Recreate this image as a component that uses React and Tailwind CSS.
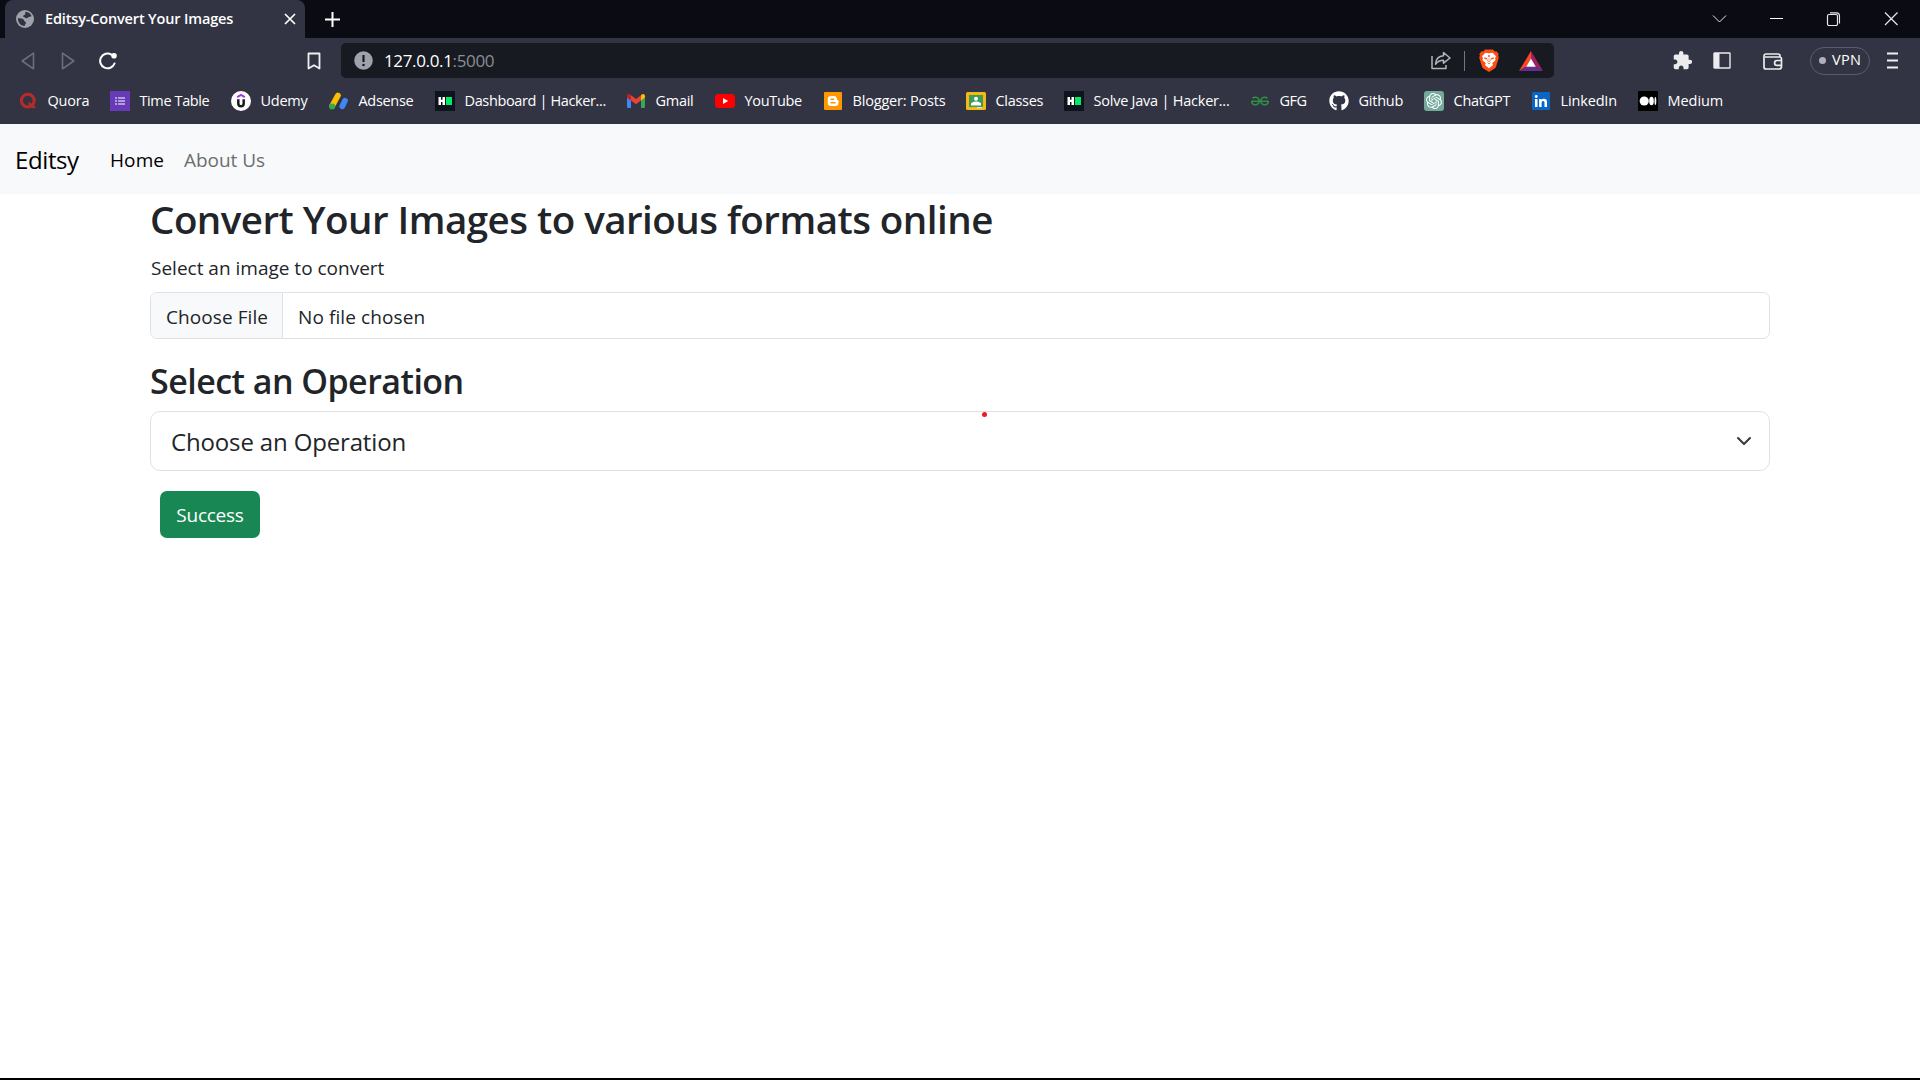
import React from "react";
import { FaGithub } from "react-icons/fa";
import { SiOpenai, SiGeeksforgeeks } from "react-icons/si";
import { MdExtension } from "react-icons/md";

const QuoraIcon = () => (
  <svg width="20" height="20" viewBox="0 0 20 20" fill="none" stroke="#b92b27">
    <circle cx="9.8" cy="9.6" r="6.4" strokeWidth="3" />
    <path d="M10.500 12.200c2.200.2 3 3.500 4.600 3.800.8.1 1.500-.1 1.900-.5" strokeWidth="2.400" />
  </svg>
);

const FormsIcon = () => (
  <svg width="20" height="20" viewBox="0 0 20 20">
    <rect width="20" height="20" fill="#673ab7" />
    <g fill="#b39ddb">
      <rect x="5" y="6" width="2" height="2" />
      <rect x="5" y="9" width="2" height="2" />
      <rect x="5" y="12" width="2" height="2" />
      <rect x="8" y="6" width="7" height="2" />
      <rect x="8" y="9" width="7" height="2" />
      <rect x="8" y="12" width="7" height="2" />
    </g>
  </svg>
);

const UdemyIcon = () => (
  <svg width="20" height="20" viewBox="0 0 20 20" fill="none">
    <circle cx="10" cy="10" r="10" fill="#fff" />
    <path d="M6.200 6.200 10 4l3.800 2.200" stroke="#a435f0" strokeWidth="2" />
    <path d="M7.300 8.200v4.200c0 1.700 1 2.800 2.700 2.800s2.700-1.100 2.700-2.800V8.200" stroke="#1c1d1f" strokeWidth="2.500" />
  </svg>
);

const AdsenseIcon = () => (
  <svg width="21" height="20" viewBox="0 0 21 20" strokeLinecap="round">
    <path d="M3.400 15.200 9.400 4.200" stroke="#fbbc04" strokeWidth="6" />
    <circle cx="3.300" cy="15.700" r="3.200" fill="#34a853" />
    <path d="M14 15.600 16.800 9.800" stroke="#4285f4" strokeWidth="6" />
  </svg>
);

const HackerRankIcon = () => (
  <svg width="20" height="20" viewBox="0 0 20 20">
    <rect width="20" height="20" fill="#0e141e" />
    <path d="M3.500 6H6v2.700h1.500V6H10v8H7.500v-3H6v3H3.500z" fill="#fff" />
    <rect x="11" y="6" width="6" height="8" fill="#00ea64" />
  </svg>
);

const GmailIcon = () => (
  <svg width="20" height="20" viewBox="0 0 20 20">
    <path d="M1 6.500 5 9v8H2.200A1.200 1.200 0 0 1 1 15.800z" fill="#4285f4" />
    <path d="M19 6.500 15 9v8h2.800a1.200 1.200 0 0 0 1.200-1.200z" fill="#34a853" />
    <path d="M5 4.300 10 8l5-3.700V9.500L10 13.200 5 9.500z" fill="#ea4335" />
    <path d="M1 5c0-2 2-2.700 3.400-1.500L5 4.200V9.600L1 6.700z" fill="#c5221f" />
    <path d="M19 5c0-2-2-2.700-3.400-1.500L15 4.200V9.600l4-2.900z" fill="#fbbc04" />
  </svg>
);

const YouTubeIcon = () => (
  <svg width="20" height="20" viewBox="0 0 20 20">
    <rect y="3" width="20" height="14" rx="3.500" fill="#f00" />
    <path d="M8 7v6l5.200-3z" fill="#fff" />
  </svg>
);

const BloggerIcon = () => (
  <svg width="20" height="20" viewBox="0 0 20 20">
    <rect x="1" y="1" width="18" height="18" rx="1" fill="#ff9800" />
    <path
      d="M8 5h2.700A3.200 3.200 0 0 1 13.900 8c0 .8.400 1 1 1.100.4.100.6.400.6.900v1.700A3.300 3.300 0 0 1 12.200 15H8a3.200 3.200 0 0 1-3.200-3.200V8.200A3.200 3.200 0 0 1 8 5z"
      fill="#fff"
    />
    <path d="M8 8.300h2.600M8 11.800h4" stroke="#ff9800" strokeWidth="1.500" strokeLinecap="round" />
  </svg>
);

const ClassroomIcon = () => (
  <svg width="20" height="20" viewBox="0 0 20 20">
    <rect y="1" width="20" height="18" rx="1.500" fill="#f4b912" />
    <rect x="3" y="4" width="14" height="12" fill="#3f9b5b" />
    <circle cx="10" cy="7.800" r="2" fill="#fff" />
    <path d="M5 14.500v-1.300c0-1.800 2.700-2.700 5-2.700s5 .9 5 2.700v1.300z" fill="#fff" />
    <path d="M11 16h5v1.300h-5z" fill="#d9e7dc" />
  </svg>
);

const LinkedInIcon = () => (
  <svg width="20" height="20" viewBox="0 0 20 20">
    <rect x="1" y="1" width="18" height="18" rx="1" fill="#0a66c2" />
    <path
      d="M4 8h2.500v8H4zM5.250 4a1.450 1.450 0 1 1 0 2.900 1.450 1.450 0 0 1 0-2.900zM8.100 8h2.400v1.100c.5-.8 1.300-1.300 2.500-1.300 2.500 0 3 1.600 3 3.700V16h-2.500v-4c0-1-.1-2.100-1.400-2.100s-1.500 1-1.500 2.100v4H8.100z"
      fill="#fff"
    />
  </svg>
);

const MediumIcon = () => (
  <svg width="20" height="20" viewBox="0 0 20 20">
    <rect width="20" height="20" rx="1" fill="#000" />
    <g fill="#fff">
      <circle cx="6.200" cy="10" r="4.600" />
      <ellipse cx="13.500" cy="10" rx="2.300" ry="4.300" />
      <ellipse cx="17.400" cy="10" rx=".9" ry="3.900" />
    </g>
  </svg>
);

const BraveIcon = () => (
  <svg width="20" height="23" viewBox="0 0 20 23">
    <path
      d="M6 .5h8l1.800 1.900 1.700-.1L19.700 5l-.6 1.700.7 1.800-2.600 8.800c-.4 1.200-1 1.800-2 2.500L10 23l-5.200-3.200c-1-.7-1.600-1.300-2-2.500L.2 8.500l.7-1.800L.3 5l2.200-2.700 1.700.1z"
      fill="#fb4f14"
    />
    <path
      d="M10 4.200 13.600 3.700 17 7.300l-1 2 .6 1.700-3.400 3.300.9 1.600L10 19.300l-4.100-3.400.9-1.600L3.400 11 4 9.300 3 7.300l3.400-3.600z"
      fill="#fff"
    />
    <path d="M5 8.300l3.200.9-.4 1.200-2.300-.5zM15 8.300l-3.200.9.4 1.200 2.300-.5zM7.600 13.300l2.400.9 2.400-.9-2.400 2z" fill="#fb4f14" />
    <path d="M8.900 6.200h2.200L10.600 8H9.400z" fill="#fb4f14" />
    <path d="M9.200 9.500l-.6 2.500 1.400.7 1.400-.7-.6-2.500" fill="none" stroke="#fb4f14" strokeWidth=".6" />
  </svg>
);

const bookmarks = [
  { label: "Quora", cls: "w-[92px] tracking-[-0.2px]", icon: <QuoraIcon /> },
  { label: "Time Table", cls: "w-[121px] tracking-[-0.39px]", icon: <FormsIcon /> },
  { label: "Udemy", cls: "w-[98px] tracking-[-0.25px]", icon: <UdemyIcon /> },
  { label: "Adsense", cls: "w-[106px] tracking-[-0.31px]", icon: <AdsenseIcon /> },
  { label: "Dashboard | Hacker...", cls: "w-[191px] tracking-[-0.37px]", icon: <HackerRankIcon /> },
  { label: "Gmail", cls: "w-[89px] tracking-[-0.29px]", icon: <GmailIcon /> },
  { label: "YouTube", cls: "w-[108px] tracking-[-0.32px]", icon: <YouTubeIcon /> },
  { label: "Blogger: Posts", cls: "w-[143px] tracking-[-0.18px]", icon: <BloggerIcon /> },
  { label: "Classes", cls: "w-[98px] tracking-[-0.3px]", icon: <ClassroomIcon /> },
  { label: "Solve Java | Hacker...", cls: "w-[186px] tracking-[-0.23px]", icon: <HackerRankIcon /> },
  { label: "GFG", cls: "w-[79px] tracking-[-0.5px]", icon: <SiGeeksforgeeks size={18} color="#2f8d46" /> },
  { label: "Github", cls: "w-[95px] tracking-[-0.23px]", icon: <FaGithub size={20} color="#fff" /> },
  {
    label: "ChatGPT",
    cls: "w-[107px] tracking-[-0.25px]",
    icon: (
      <span className="flex size-5 items-center justify-center rounded-[3px] bg-[#74aa9c]">
        <SiOpenai size={16} color="#fff" />
      </span>
    ),
  },
  { label: "LinkedIn", cls: "w-[107px] tracking-[-0.15px]", icon: <LinkedInIcon /> },
  { label: "Medium", cls: "w-[100px] tracking-[-0.05px]", icon: <MediumIcon /> },
];

function TabBar() {
  return (
    <div className="flex h-[38px] bg-[#0b0b14] pl-[5px]">
      <div className="flex w-[300px] items-center rounded-t-lg bg-[#323443] pl-[11px] pr-[9px]">
        <svg width="18" height="18" viewBox="0 0 18 18" className="shrink-0">
          <circle cx="9" cy="9" r="9" fill="#a0a2ab" />
          <path
            d="M9.500 1.800c2.900.2 5.200 1.900 6.200 4.400-1.500-.2-2 .8-3.300.8-.5 1.300-1.800 1.300-2.900 1.100C9.200 6.800 7.500 7.400 7 6.200c.2-1.300 1.800-.9 2.200-2 .3-.9-.3-1.500.3-2.400zM1.900 8.300c2.200 0 4.500 0 5.700 1.200.8.900.4 1.800 1.600 2.200 1 .4 1.100 1.500.3 2.200-.6.500-.7 1.400-.8 2.200-3.800-.1-6.900-3.300-6.800-7.800z"
            fill="#323443"
          />
        </svg>
        <span className="mb-px ml-[11px] flex-1 whitespace-nowrap text-[14.5px] font-semibold tracking-[-0.16px]">
          Editsy-Convert Your Images
        </span>
        <svg width="12" height="12" viewBox="0 0 12 12" stroke="#fff" strokeWidth="1.700">
          <path d="M1 1l10 10M11 1 1 11" />
        </svg>
      </div>
      <div className="flex items-center pl-5">
        <svg width="15" height="15" viewBox="0 0 15 15" stroke="#fff" strokeWidth="2">
          <path d="M7.500 0v15M0 7.500h15" />
        </svg>
      </div>
      <svg className="ml-auto mr-[21px] mt-3" width="187" height="14" viewBox="0 0 187 14" fill="none" stroke="#e8e8ea">
        <path d="M1 3.500l6.500 6.500L14 3.500" />
        <path d="M58 6.500h13" stroke="#fff" />
        <path d="M118 .9h6.500a3 3 0 0 1 3 3v7.600" strokeWidth="1.100" />
        <rect x="115.500" y="2.500" width="10" height="11" rx="1.500" strokeWidth="1.200" />
        <path d="M173 .5l12.500 12.500M185.500 .5 173 13" strokeWidth="1.200" />
      </svg>
    </div>
  );
}

function AddressBar() {
  return (
    <div className="flex h-[45px] items-center">
      <div className="flex w-[341px] items-center pl-[21px]">
        <svg width="14" height="18" viewBox="0 0 14 18" fill="none" stroke="#6c6e7b" strokeWidth="1.600" strokeLinejoin="round">
          <path d="M12.500 1.200v15.600L1.200 9z" />
        </svg>
        <svg className="ml-[26px]" width="14" height="18" viewBox="0 0 14 18" fill="none" stroke="#6c6e7b" strokeWidth="1.600" strokeLinejoin="round">
          <path d="M1.500 1.200v15.600L12.800 9z" />
        </svg>
        <svg className="ml-[23px]" width="20" height="18" viewBox="0 0 20 18" fill="none" stroke="#fff" strokeWidth="2">
          <path d="M13.400 2.600A7.400 7.400 0 1 0 16.500 11.500" strokeLinecap="round" />
          <circle cx="16" cy="3.800" r="2.800" fill="#fff" stroke="none" />
        </svg>
        <svg className="ml-[189px]" width="14" height="18" viewBox="0 0 14 18" fill="none" stroke="#f0f0f2" strokeWidth="1.800" strokeLinejoin="round">
          <path d="M1.500 1.500h11v15L7 13.200l-5.500 3.300z" />
        </svg>
      </div>
      <div className="flex h-[35px] w-[1213px] shrink-0 items-center rounded-[5px] bg-[#181a21] pl-[13px] pr-[11px]">
        <svg width="19" height="19" viewBox="0 0 19 19">
          <circle cx="9.500" cy="9.500" r="9.300" fill="#a0a2ab" />
          <path d="M9.500 4v7" stroke="#181a21" strokeWidth="2.200" />
          <circle cx="9.500" cy="14" r="1.300" fill="#181a21" />
        </svg>
        <div className="ml-[11px] flex-1 whitespace-nowrap text-[17px] leading-[34px]">
          <span className="tracking-[-0.35px]">127.0.0.1</span>
          <span className="tracking-[-0.35px] text-[#8b8d93]">:5000</span>
        </div>
        <svg width="20" height="19" viewBox="0 0 20 19" fill="none" stroke="#b4b5ba" strokeWidth="1.500" strokeLinejoin="round">
          <path d="M1 5v12.500h14V14" />
          <path d="M12.500 1.500 19 7l-6.500 5.200V9.200c-3.300 0-5.700.8-8 4 .3-4.700 3.300-8 8-8.400z" />
        </svg>
        <div className="ml-[13px] mr-[14px] h-5 w-px bg-[#74767d]" />
        <BraveIcon />
        <svg className="ml-5" width="24" height="20" viewBox="0 0 24 20">
          <path d="M12 0 0 20l7.500-4.500L12 7.500z" fill="#ff4724" />
          <path d="M12 0l12 20-7.500-4.500L12 7.500z" fill="#9e1f63" />
          <path d="M0 20h24l-7.500-4.500h-9z" fill="#662d91" />
          <path d="M12 7.500l4.800 8.200H7.200z" fill="#fff" />
        </svg>
      </div>
      <div className="flex flex-1 items-center pl-[118px]">
        <MdExtension size={21} color="#ececee" />
        <svg className="ml-5" width="18" height="17" viewBox="0 0 18 17">
          <rect x="1" y="1" width="16" height="15" rx=".5" fill="none" stroke="#ececee" strokeWidth="1.400" />
          <rect x="1" y="1" width="5.500" height="15" fill="#ececee" />
        </svg>
        <svg className="ml-8 mt-0.5" width="20" height="17" viewBox="0 0 20 17" fill="none" stroke="#ececee" strokeWidth="1.700">
          <path d="M17 4V3a2 2 0 0 0-2-2H3a2 2 0 0 0-2 2v11a2 2 0 0 0 2 2h13a2.500 2.500 0 0 0 2.500-2.500V6A2 2 0 0 0 16.500 4H2" />
          <path d="M18.500 7.500H14a2.300 2.300 0 0 0 0 4.800h4.500" />
        </svg>
        <div className="ml-[27px] flex h-7 w-[60px] items-center rounded-full border border-[#5b5d6e] pl-2">
          <span className="size-[7px] rounded-full bg-[#adafc2]" />
          <span className="mb-0.5 ml-1.5 text-[14.5px] tracking-[0.3px]">VPN</span>
        </div>
        <svg className="ml-[17px]" width="12" height="17" viewBox="0 0 12 17" stroke="#f0f0f2" strokeWidth="1.800">
          <path d="M0 1.500h11M0 8.500h11M0 15.500h11" />
        </svg>
      </div>
    </div>
  );
}

function BookmarksBar() {
  return (
    <div className="flex h-[41px] pb-[5px] pl-[18px]">
      {bookmarks.map((b, i) => (
        <div key={i} className={`flex shrink-0 items-center whitespace-nowrap text-[14.5px] ${b.cls}`}>
          <span className="flex size-5 shrink-0 items-center justify-center">{b.icon}</span>
          <span className="mb-px ml-[9.500px]">{b.label}</span>
        </div>
      ))}
    </div>
  );
}

export default function App() {
  return (
    <div className="flex h-[1080px] w-[1920px] flex-col overflow-hidden border-b-2 border-black bg-white font-['Open_Sans','Noto_Sans',sans-serif] text-[#212529]">
      <header className="shrink-0 bg-[#323443] text-white">
        <TabBar />
        <AddressBar />
        <BookmarksBar />
      </header>

      <nav className="flex h-[70px] shrink-0 items-center bg-[#f8f9fa] pl-[15px] pt-0.5 text-[19px]">
        <a className="w-[95px] text-2xl tracking-[-0.4px] text-black">Editsy</a>
        <a className="w-[74px] tracking-[0.1px] text-black">Home</a>
        <a className="tracking-[-0.04px] text-[#6c6d6e]">About Us</a>
      </nav>

      <main className="mx-auto w-[1620px] text-[19px]">
        <h1 className="h-[58px] whitespace-nowrap text-[38.5px] font-semibold leading-[50px] tracking-[-0.52px]">
          Convert Your Images to various formats online
        </h1>
        <label className="mb-[9px] block h-[31px] pl-px leading-8">Select an image to convert</label>
        <div className="flex h-[47px] overflow-hidden rounded-[7px] border border-[#dee2e6] leading-[48px]">
          <span className="w-[132px] border-r border-[#dee2e6] bg-[#f8f9fa] pl-[15px] tracking-[0.08px]">Choose File</span>
          <span className="pl-[15px] tracking-[0.1px]">No file chosen</span>
        </div>
        <h3 className="mb-[9px] mt-[21px] h-[42px] text-[34px] font-semibold leading-[42px] tracking-[-0.54px]">
          Select an Operation
        </h3>
        <div className="relative flex h-[60px] items-center justify-between rounded-[10px] border border-[#dee2e6] pl-5 pr-[17px]">
          <span className="mt-px text-2xl tracking-[-0.15px]">Choose an Operation</span>
          <svg width="16" height="10" viewBox="0 0 16 10" fill="none" stroke="#343a40" strokeWidth="2" strokeLinecap="round" strokeLinejoin="round">
            <path d="M2 2l6 6 6-6" />
          </svg>
          <span className="absolute left-[831px] top-0 size-[5px] rounded-full bg-[#e81c24]" />
        </div>
        <button className="ml-2.5 mt-5 h-[47px] w-[100px] rounded-[7px] bg-[#198754] pt-px tracking-[-0.25px] text-white">
          Success
        </button>
      </main>
    </div>
  );
}
